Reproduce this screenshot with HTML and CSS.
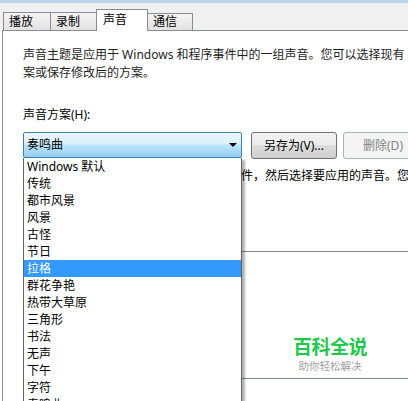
FILE: index.html
```html
<!DOCTYPE html>
<html lang="zh-CN">
<head>
<meta charset="utf-8">
<title>声音</title>
<link rel="stylesheet" href="styles.css">
</head>
<body>
<div class="frame"></div>
<div class="tabstrip">
  <div class="tab tab-a">播放</div>
  <div class="tab tab-b">录制</div>
  <div class="tab tab-c active">声音</div>
  <div class="tab tab-d">通信</div>
</div>
<div class="panel">
  <p class="intro">声音主题是应用于 Windows 和程序事件中的一组声音。您可以选择现有<br>案或保存修改后的方案。</p>
  <p class="label">声音方案(H):</p>
  <div class="row">
    <div class="combo">
      <span class="combo-text">奏鸣曲</span>
      <span class="arrow"></span>
      <ul class="dropdown">
        <li>Windows 默认</li>
        <li>传统</li>
        <li>都市风景</li>
        <li>风景</li>
        <li>古怪</li>
        <li>节日</li>
        <li class="sel">拉格</li>
        <li>群花争艳</li>
        <li>热带大草原</li>
        <li>三角形</li>
        <li>书法</li>
        <li>无声</li>
        <li>下午</li>
        <li>字符</li>
        <li>奏鸣曲</li>
      </ul>
    </div>
    <button class="btn save">另存为(V)...</button>
    <button class="btn disabled">删除(D)</button>
  </div>
  <p class="hint">件，然后选择要应用的声音。您</p>
  <div class="events"></div>
</div>
<div class="watermark">
  <div class="wm-title">百科全说</div>
  <div class="wm-sub">助你轻松解决</div>
</div>
</body>
</html>
```

FILE: styles.css
```css
* { box-sizing: border-box; }
html, body {
  margin: 0;
  padding: 0;
  width: 408px;
  height: 401px;
  overflow: hidden;
  background: #ffffff;
  font-family: "Noto Sans", "Noto Sans CJK SC", sans-serif;
  font-size: 12px;
  color: #000;
}
.frame {
  height: 3px;
  background: #bcd3ec;
}
.tabstrip {
  height: 27px;
  background: #f0f0f0;
  display: flex;
  align-items: flex-end;
  padding-left: 3px;
  position: relative;
  z-index: 2;
}
.tab {
  height: 18px;
  border: 1px solid #898c95;
  border-bottom: none;
  background: linear-gradient(#f4f4f4, #e2e2e2);
  padding-left: 5px;
  line-height: 17px;
  white-space: nowrap;
  margin-right: -1px;
  flex-shrink: 0;
}
.tab-a { width: 48px; }
.tab-b { width: 47px; }
.tab-c { width: 52px; }
.tab-d { width: 46px; height: 17px; line-height: 16px; }
.tab.active {
  height: 22px;
  background: #ffffff;
  margin-bottom: -1px;
  padding-left: 6px;
  line-height: 19px;
  position: relative;
  z-index: 3;
}
.panel {
  margin-left: 2px;
  border-top: 1px solid #898c95;
  border-left: 1px solid #898c95;
  padding-left: 20px;
  height: 380px;
}
.intro {
  margin: 15px 0 0 0;
  line-height: 18px;
  white-space: nowrap;
  color: #1e1e1e;
}
.label {
  margin: 24px 0 0 0;
  line-height: 18px;
}
.row {
  margin-top: 8px;
  display: flex;
  align-items: flex-start;
  height: 27px;
  width: 420px;
}
.combo {
  position: relative;
  flex-shrink: 0;
  width: 219px;
  height: 26px;
  border: 1px solid #3c7fb1;
  border-radius: 2px;
  background: linear-gradient(#eaf6fd 0%, #d9f0fc 45%, #bee6fd 50%, #94cdf0 100%);
  display: flex;
  align-items: center;
  padding-left: 3px;
}
.combo-text {
  line-height: 18px;
}
.arrow {
  position: absolute;
  right: 4px;
  top: 10px;
  width: 0;
  height: 0;
  border-left: 4px solid transparent;
  border-right: 4px solid transparent;
  border-top: 4px solid #000;
}
.dropdown {
  position: absolute;
  left: -1px;
  top: 25px;
  width: 219px;
  margin: 0;
  padding: 0;
  list-style: none;
  background: #ffffff;
  border: 1px solid #646464;
  border-top: none;
  box-shadow: 3px 2px 2px rgba(0, 0, 0, 0.3);
  z-index: 5;
}
.dropdown li {
  height: 17px;
  line-height: 17px;
  padding-left: 3px;
  white-space: nowrap;
}
.dropdown li.sel {
  background: #3399ff;
  color: #ffffff;
}
.btn {
  flex-shrink: 0;
  height: 27px;
  font: inherit;
  margin: 0;
  padding: 0;
  border: 1px solid #707070;
  border-radius: 3px;
  background: linear-gradient(#f2f2f2 0%, #ebebeb 50%, #dddddd 50%, #cfcfcf 100%);
  color: #000;
  line-height: 18px;
}
.btn.save {
  margin-left: 9px;
  width: 86px;
}
.btn.disabled {
  margin-left: 6px;
  width: 80px;
  border-color: #adb2b5;
  background: #f4f4f4;
  color: #838383;
}
.hint {
  margin: 8px 0 0 0;
  padding-left: 218px;
  line-height: 18px;
  white-space: nowrap;
}
.events {
  margin-top: 66px;
  height: 128px;
  width: 420px;
  border-top: 1px solid #828790;
  border-bottom: 1px solid #828790;
}
.watermark {
  position: absolute;
  left: 292px;
  top: 336px;
  text-align: center;
  width: 76px;
}
.wm-title {
  font-size: 19px;
  font-weight: bold;
  color: #1dc94a;
  line-height: 22px;
  white-space: nowrap;
  letter-spacing: -0.5px;
}
.wm-sub {
  margin-top: 2px;
  font-size: 10.5px;
  color: #a0a0a0;
  line-height: 12px;
  white-space: nowrap;
}
```
